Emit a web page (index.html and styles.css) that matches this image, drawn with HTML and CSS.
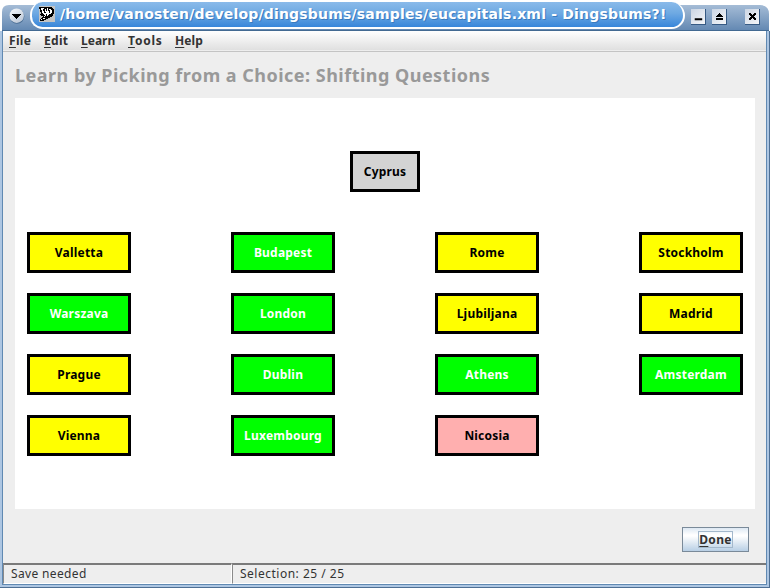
FILE: index.html
```html
<!DOCTYPE html>
<html lang="en">
<head>
<meta charset="utf-8">
<title>Dingsbums?!</title>
<link rel="stylesheet" href="styles.css">
</head>
<body>
<div class="window">
  <header class="titlebar">
    <svg class="window-menu" width="16" height="16" viewBox="0 0 16 16">
      <defs><linearGradient id="ball" x1="0" y1="0" x2="0.6" y2="1"><stop offset="0" stop-color="#f8fafc"/><stop offset="1" stop-color="#bfcad9"/></linearGradient></defs>
      <circle cx="8" cy="8.5" r="7.3" fill="#496d94"/>
      <circle cx="7.7" cy="7.7" r="7.2" fill="url(#ball)"/>
      <path d="M3 6h9v1h-1v1h-1v1H9v1H8v1H7v-1H6V9H5V8H4V7H3z" fill="#000"/>
    </svg>
    <div class="caption">
      <svg class="app-icon" width="16" height="16" viewBox="0 0 16 16" shape-rendering="crispEdges">
        <path fill="#c3c3c3" d="M0 0h16v16H0z"/>
        <path fill="#000" d="M0 1h13v1h1v1h1v5h-1v2h-1v1h-2v1H9v1H7v1H5v1H1v-2h1v-1h1v-1h1v-1H2V9H1V8h1V6H1V3H0z"/>
        <path fill="#fff" d="M2 2h3v1H4v2h1v2h1v2H5V8H4V7H3V4H2zM6 3h1v2h1V2h1v3h1V3h2v1h1v3h-1v1h-2v1H9v1H8V8H7v2H6V7h1V6H6zM5 10h1v1H5zM4 12h2v1H3v1H2v-1h2z"/>
        <path fill="#000" d="M10 4h1v3h-1z"/>
      </svg>
      <span class="caption-text">/home/vanosten/develop/dingsbums/samples/eucapitals.xml - Dingsbums?!</span>
    </div>
    <div class="controls">
      <svg class="control" width="15" height="16" viewBox="0 0 15 16"><path d="M4 10h8v2H4z"/></svg>
      <svg class="control" width="15" height="16" viewBox="0 0 15 16" shape-rendering="crispEdges"><path d="M7 4h2v1h1v1h1v1h1v1h1v1H3V8h1V7h1V6h1V5h1zM4 10h8v2H4z"/></svg>
      <svg class="control control-close" width="15" height="16" viewBox="0 0 15 16" shape-rendering="crispEdges"><path d="M4 4h2v1h1v1h2V5h1V4h2v2h-1v1h-1v2h1v1h1v2h-2v-1H9v-1H7v1H6v1H4v-2h1V9h1V7H5V6H4z"/></svg>
    </div>
  </header>
  <div class="frame">
    <nav class="menubar">
      <span class="menu file"><u>F</u>ile</span>
      <span class="menu edit"><u>E</u>dit</span>
      <span class="menu learn"><u>L</u>earn</span>
      <span class="menu tools"><u>T</u>ools</span>
      <span class="menu help"><u>H</u>elp</span>
    </nav>
    <main class="content">
      <h1 class="heading">Learn by Picking from a Choice: Shifting Questions</h1>
      <section class="board">
        <div class="card question">Cyprus</div>
        <div class="choices">
          <div class="card">Valletta</div><div class="card done">Budapest</div><div class="card">Rome</div><div class="card">Stockholm</div>
          <div class="card done">Warszava</div><div class="card done">London</div><div class="card">Ljubiljana</div><div class="card">Madrid</div>
          <div class="card">Prague</div><div class="card done">Dublin</div><div class="card done">Athens</div><div class="card done">Amsterdam</div>
          <div class="card">Vienna</div><div class="card done">Luxembourg</div><div class="card wrong">Nicosia</div>
        </div>
      </section>
      <div class="actions"><button class="button"><span class="focus"><u>D</u>one</span></button></div>
    </main>
    <footer class="statusbar">
      <div class="status state">Save needed</div>
      <div class="status selection">Selection: 25 / 25</div>
    </footer>
  </div>
</div>
</body>
</html>
```
FILE: styles.css
```css
* { box-sizing: border-box; }
body { margin: 0; background: #fff; font-family: "Noto Sans", "Open Sans", sans-serif; }
.window {
  width: 770px;
  height: 588px;
  display: flex;
  flex-direction: column;
  overflow: hidden;
}
.titlebar {
  height: 31px;
  flex: none;
  display: flex;
  align-items: flex-start;
  padding: 2px 0 0 9px;
  background: linear-gradient(#a5bcd6, #6489b3) 0 5px / 100% 25px no-repeat, linear-gradient(#436a92, #436a92) 0 30px / 100% 1px no-repeat;
  clip-path: path("M2 31V12Q2 5 9 5H30V0H684V5H760Q769 5 769 14V31Z");
}
.window-menu { margin-top: 6px; flex: none; }
.caption {
  width: 655px;
  height: 27px;
  flex: none;
  margin-left: 5px;
  padding: 2px 0 0 7px;
  display: flex;
  align-items: flex-start;
  border: solid #fff;
  border-width: 0 2px 2px;
  border-radius: 13px 14px 14px 13px;
  background: linear-gradient(#8abaea, #6ea9e2 45%, #3886da);
}
.app-icon { margin-top: 2px; flex: none; }
.caption-text {
  margin: 2px 0 0 5px;
  font: bold 14px/17px "DejaVu Sans", sans-serif;
  letter-spacing: 0.19px;
  color: #fff;
  white-space: nowrap;
  text-shadow: 1px 1px 0 #397cbf;
}
.controls { display: flex; margin: 7px 0 0 6px; gap: 6px; }
.control {
  flex: none;
  background: linear-gradient(135deg, #cbd5e3, #f4f6f9);
  border-right: 1px solid #365a84;
  border-bottom: 1px solid #365a84;
}
.control-close { margin-left: 12px; }
.frame {
  flex: 1;
  min-height: 0;
  display: flex;
  flex-direction: column;
  border: solid #adc6e2;
  border-width: 0 3px 4px 3px;
  background: #eee;
  position: relative;
}
.frame::before {
  content: "";
  position: absolute;
  inset: 0 0 -1px -1px;
  border: solid #6089b2;
  border-width: 0 1px 1px;
  pointer-events: none;
}
.frame::after {
  content: "";
  position: absolute;
  inset: 0 -3px -4px -3px;
  border: solid #4e6f94;
  border-width: 0 1px 1px 0;
  pointer-events: none;
}
.menubar {
  height: 21px;
  flex: none;
  display: flex;
  padding-left: 6px;
  background: linear-gradient(#fff, #dedede);
  border-bottom: 1px solid #c4c4c4;
  box-shadow: inset 0 -1px #eee;
  font-size: 12px;
  font-weight: bold;
  line-height: 20px;
  color: #333;
}
.menu { white-space: nowrap; }
u { text-underline-offset: 2px; text-decoration-thickness: 1px; }
.file { width: 35px; letter-spacing: 0.3px; }
.edit { width: 37px; letter-spacing: 0.3px; }
.learn { width: 47px; }
.tools { width: 47px; letter-spacing: 0.8px; }
.help { letter-spacing: 0.1px; }
.content { flex: 1; padding: 9px 12px 0 12px; }
.heading {
  margin: 0;
  height: 37px;
  font-size: 18px;
  line-height: 28px;
  font-weight: bold;
  letter-spacing: 0.48px;
  color: #999;
  white-space: nowrap;
}
.board {
  height: 411px;
  padding: 53px 12px 0;
  background: #fff;
}
.card {
  height: 41px;
  border: 3px solid #000;
  background: #ff0;
  color: #000;
  font-size: 12px;
  font-weight: bold;
  line-height: 35px;
  text-align: center;
  letter-spacing: 0.2px;
  white-space: nowrap;
}
.question { width: 70px; margin: 0 auto 40px; background: #d3d3d3; }
.done { background: #0f0; color: #fff; }
.wrong { background: #ffafaf; }
.choices {
  display: grid;
  grid-template-columns: repeat(4, 104px);
  justify-content: space-between;
  row-gap: 20px;
}
.actions { display: flex; justify-content: flex-end; padding: 18px 6px 0 0; }
.button {
  width: 67px;
  height: 25px;
  padding: 0;
  display: flex;
  align-items: center;
  justify-content: center;
  border: 1px solid #7a8a99;
  background: linear-gradient(#dde8f3, #fff 30%, #fff 35%, #b8cfe5);
  font: bold 12px/15px "Noto Sans", sans-serif;
  color: #333;
}
.focus { width: 35px; height: 17px; border: 1px solid #a3b8cc; text-align: center; letter-spacing: 0.3px; }
.statusbar { flex: none; height: 21px; display: flex; font-size: 12px; line-height: 17px; color: #333; }
.status {
  border: solid;
  border-width: 2px 1px 1px;
  border-color: #7a7a7a #fff #fff #8a8a8a;
  padding-left: 7px;
  letter-spacing: 0.35px;
}
.state { width: 229px; }
.selection { flex: 1; letter-spacing: 0.5px; }
```
